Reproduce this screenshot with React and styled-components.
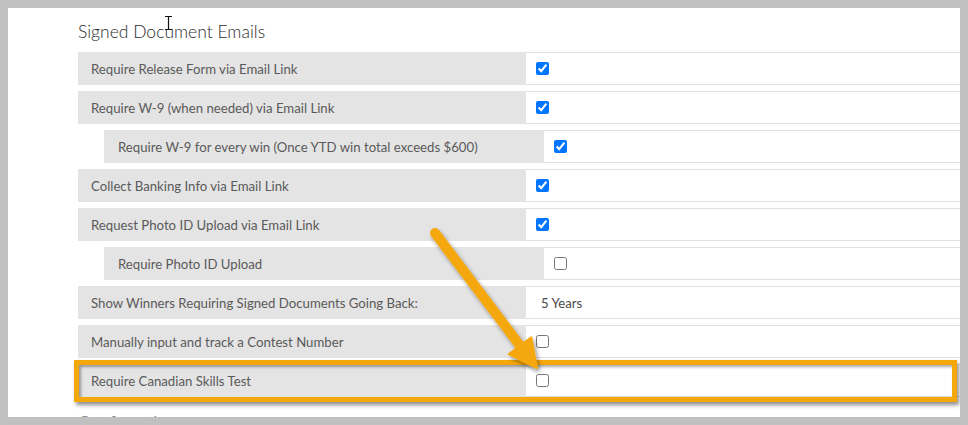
import React from "react";
import styled, { createGlobalStyle } from "styled-components";

const GlobalStyle = createGlobalStyle`
  html, body {
    margin: 0;
    padding: 0;
    background: #c0c0c0;
    font-family: Lato, "Liberation Sans", sans-serif;
  }
`;

// grey frame around the captured region
const Frame = styled.div`
  width: 968px;
  height: 425px;
  padding: 8px 8px 0 8px;
  box-sizing: border-box;
  background: #c0c0c0;
`;

const Panel = styled.div`
  position: relative;
  width: 952px;
  height: 409px;
  background: #ffffff;
  overflow: hidden;
  padding-left: 70px;
  box-sizing: border-box;
`;

const Heading = styled.h2`
  margin: 0;
  padding-top: 13px;
  height: 44px;
  box-sizing: border-box;
  font-size: 17.5px;
  font-weight: 300;
  color: #2b2b2b;
  line-height: 22px;
`;

// next section title, only its top shows under the panel edge
const NextHeading = styled(Heading)`
  padding-top: 0;
  margin-top: 15px;
  color: #777;
`;

const Rows = styled.div`
  display: flex;
  flex-direction: column;
  gap: 6px;
`;

const Row = styled.div`
  position: relative;
  display: flex;
  height: 33px;
  margin-left: ${({ $indent }) => ($indent ? "26px" : "0")};

  ${({ $highlight }) =>
    $highlight &&
    `
    &::after {
      content: "";
      position: absolute;
      left: -4px;
      top: -4px;
      width: 873px;
      height: 32px;
      border: 5px solid #f5a80b;
      box-shadow: 2px 3px 4px rgba(0, 0, 0, 0.45), inset 2px 2px 3px rgba(0, 0, 0, 0.35);
      pointer-events: none;
    }
  `}
`;

const Label = styled.div`
  flex: 0 0 ${({ $indent }) => ($indent ? "440px" : "448px")};
  display: flex;
  align-items: center;
  padding-left: ${({ $indent }) => ($indent ? "14px" : "13px")};
  box-sizing: border-box;
  background: #e4e4e4;
  color: #5a5a5a;
  font-size: 13.2px;
`;

const Value = styled.div`
  flex: 1;
  display: flex;
  align-items: center;
  padding-left: 10px;
  border-top: 1px solid #e0e0e0;
  border-bottom: 1px solid #e0e0e0;
  box-sizing: border-box;
  color: #4a4a4a;
  font-size: 13.2px;
`;

const ValueText = styled.span`
  padding-left: 5px;
`;

const Check = styled.input.attrs({ type: "checkbox", readOnly: true })`
  width: 13px;
  height: 13px;
  margin: 0;
`;

const Overlay = styled.svg`
  position: absolute;
  left: 0;
  top: 0;
  pointer-events: none;
  overflow: visible;
`;

const rows = [
  { label: "Require Release Form via Email Link", checked: true },
  { label: "Require W-9 (when needed) via Email Link", checked: true },
  { label: "Require W-9 for every win (Once YTD win total exceeds $600)", checked: true, indent: true },
  { label: "Collect Banking Info via Email Link", checked: true },
  { label: "Request Photo ID Upload via Email Link", checked: true },
  { label: "Require Photo ID Upload", checked: false, indent: true },
  { label: "Show Winners Requiring Signed Documents Going Back:", text: "5 Years" },
  { label: "Manually input and track a Contest Number", checked: false },
  { label: "Require Canadian Skills Test", checked: false, highlight: true },
];

export default function App() {
  return (
    <>
      <GlobalStyle />
      <Frame>
        <Panel>
          <Heading>Signed Document Emails</Heading>
          <Rows>
            {rows.map((r) => (
              <Row key={r.label} $indent={r.indent} $highlight={r.highlight}>
                <Label $indent={r.indent}>{r.label}</Label>
                <Value>
                  {r.text ? <ValueText>{r.text}</ValueText> : <Check checked={r.checked} />}
                </Value>
              </Row>
            ))}
          </Rows>
          <NextHeading>Confirmation</NextHeading>

          {/* annotation arrow + text cursor, panel coords = page - 8 */}
          <Overlay width="952" height="409">
            <defs>
              <filter id="sh" x="-20%" y="-20%" width="140%" height="140%">
                <feDropShadow dx="2" dy="3" stdDeviation="2" floodColor="#000" floodOpacity="0.4" />
              </filter>
            </defs>
            <g filter="url(#sh)" fill="#f5a80b" stroke="#f5a80b">
              <line x1="427" y1="225" x2="513" y2="339" strokeWidth="10" strokeLinecap="round" />
              <polygon points="529,360 500.9,346.1 523.2,329.3" strokeWidth="2" strokeLinejoin="round" />
            </g>
            <g stroke="#111" strokeWidth="1.2" fill="none">
              <path d="M157 8.5 h7 M160.5 8.5 v13 M157 21.5 h7" />
            </g>
          </Overlay>
        </Panel>
      </Frame>
    </>
  );
}
